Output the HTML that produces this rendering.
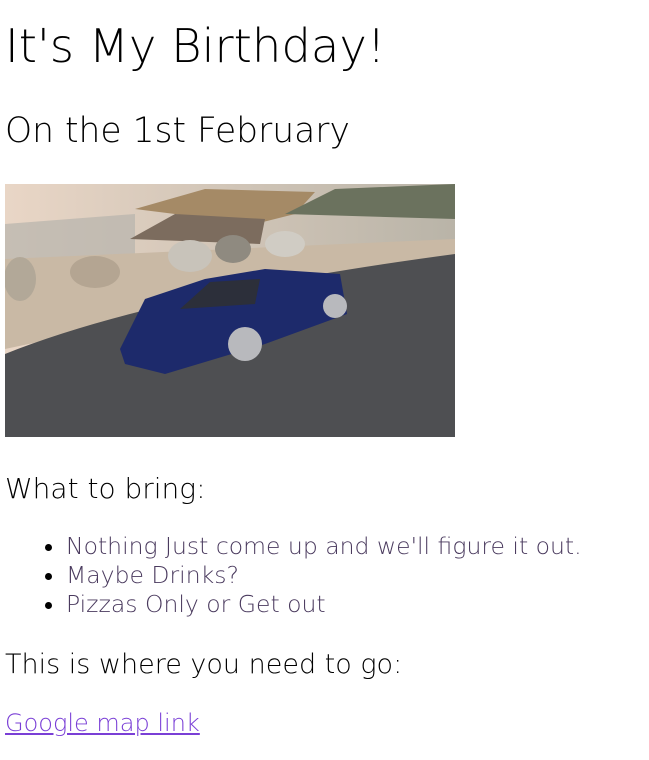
<!DOCTYPE html>
<html><head><meta charset="utf-8"><style>
body{margin:0;width:649px;height:760px;background:#fff;font-family:"DejaVu Sans","Liberation Sans",sans-serif;font-weight:200;color:#000;position:relative;overflow:hidden}
.t{position:absolute;left:5px;white-space:nowrap;font-weight:200}
ul{position:absolute;left:0;top:532px;margin:0;padding-left:66px;font-size:23.5px;line-height:29px;color:#4a3a5e;white-space:nowrap}
li::marker{color:#000}
a{color:#7a3fd6}
</style></head><body>
<div class="t" style="top:19px;font-size:46.5px">It's My Birthday!</div>
<div class="t" style="top:111px;font-size:34.5px">On the 1st February</div>
<svg style="position:absolute;left:5px;top:184px" width="450" height="253" viewBox="0 0 450 253">
<defs><linearGradient id="s" x1="0" y1="0" x2="1" y2="0"><stop offset="0" stop-color="#e9d6c6"/><stop offset="1" stop-color="#b9b4a8"/></linearGradient></defs>
<rect width="450" height="253" fill="url(#s)"/>
<path d="M130 25 L200 5 L310 8 L290 30 L250 40 Z" fill="#a58a66"/>
<path d="M280 30 L330 5 L450 0 L450 35 Z" fill="#6b725e"/>
<path d="M0 40 L130 30 L130 80 L0 90 Z" fill="#b6b3ad" opacity=".7"/>
<path d="M125 55 L170 30 L260 35 L255 60 Z" fill="#7c6c5e"/>
<path d="M0 75 L450 55 L450 70 L0 165 Z" fill="#c9b9a5"/>
<path d="M0 170 Q150 110 450 70 L450 253 L0 253 Z" fill="#4e4f52"/>
<ellipse cx="90" cy="88" rx="25" ry="16" fill="#b4a592"/>
<ellipse cx="185" cy="72" rx="22" ry="16" fill="#c8c3ba"/>
<ellipse cx="228" cy="65" rx="18" ry="14" fill="#8f8a80"/>
<ellipse cx="280" cy="60" rx="20" ry="13" fill="#d0ccc4"/>
<ellipse cx="15" cy="95" rx="16" ry="22" fill="#b2a898"/>
<path d="M115 165 L140 115 L200 95 L260 85 L335 90 L342 130 L260 160 L160 190 L120 180 Z" fill="#1d2a6b"/>
<path d="M175 125 L205 98 L255 95 L250 120 Z" fill="#2c2f3a"/>
<circle cx="240" cy="160" r="17" fill="#b8b9bd"/><circle cx="330" cy="122" r="12" fill="#b8b9bd"/>
</svg>
<div class="t" style="top:472px;font-size:28px">What to bring:</div>
<ul><li>Nothing Just come up and we'll figure it out.</li><li>Maybe Drinks?</li><li>Pizzas Only or Get out</li></ul>
<div class="t" style="top:649px;font-size:27px">This is where you need to go:</div>
<div class="t" style="top:709px;font-size:24px"><a href="#">Google map link</a></div>
</body></html>
